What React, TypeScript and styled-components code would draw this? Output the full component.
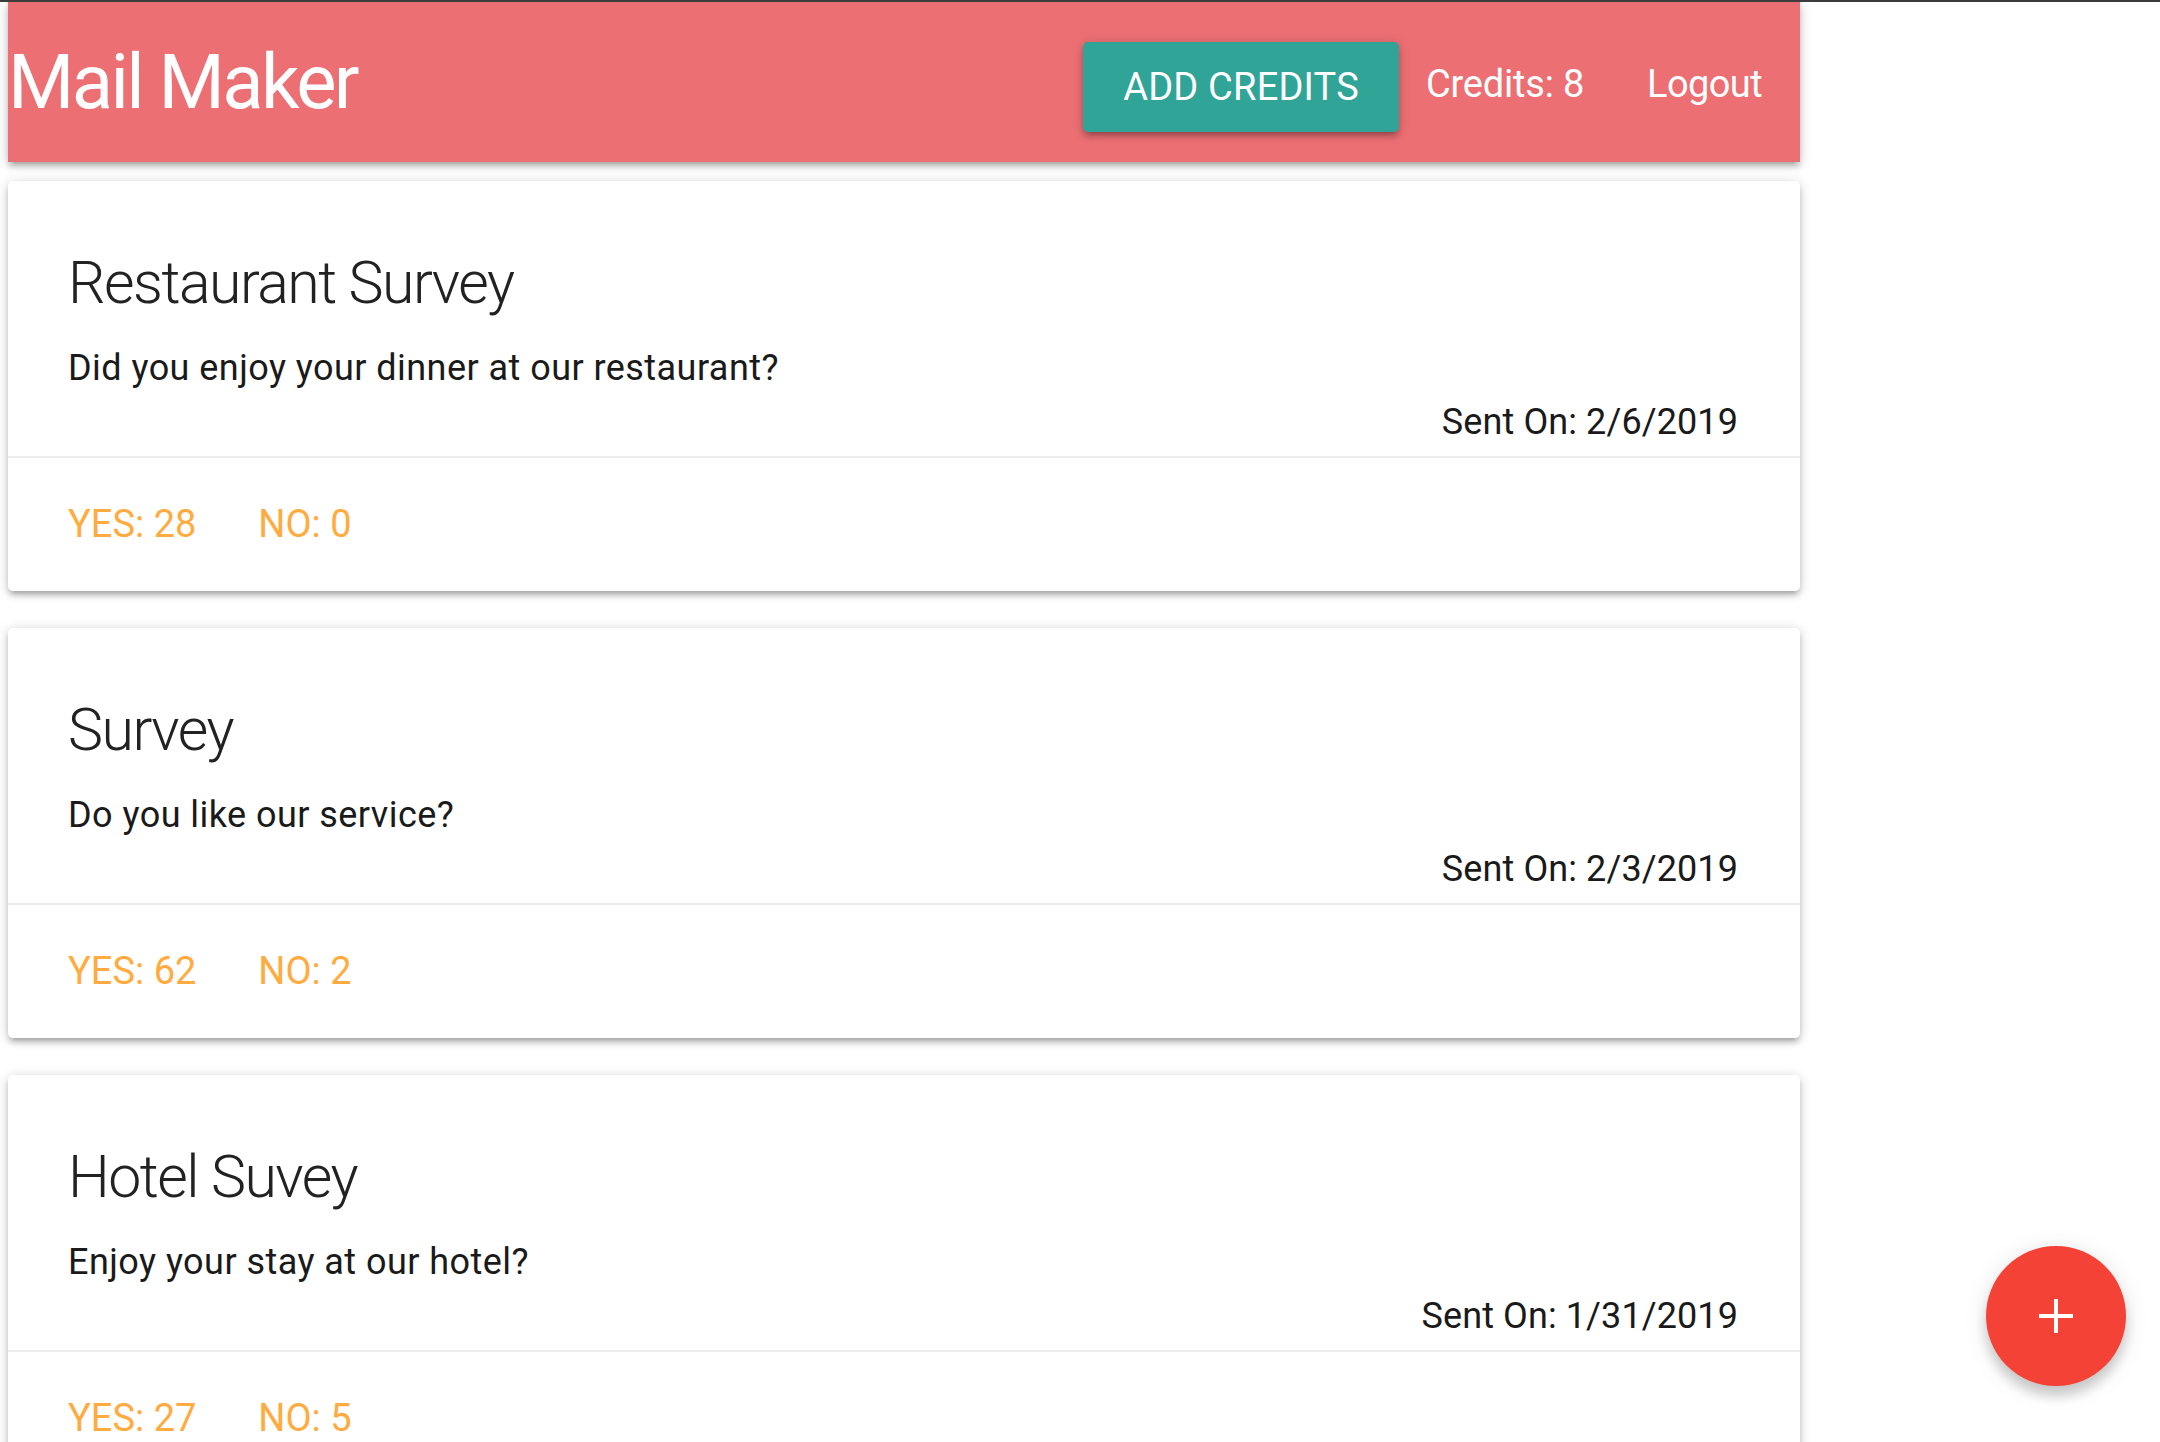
import React from "react";
import styled, { createGlobalStyle } from "styled-components";

type Survey = {
  id: number;
  title: string;
  body: string;
  yes: number;
  no: number;
  sentOn: string;
};

const surveys: Survey[] = [
  {
    id: 1,
    title: "Restaurant Survey",
    body: "Did you enjoy your dinner at our restaurant?",
    yes: 28,
    no: 0,
    sentOn: "2/6/2019",
  },
  {
    id: 2,
    title: "Survey",
    body: "Do you like our service?",
    yes: 62,
    no: 2,
    sentOn: "2/3/2019",
  },
  {
    id: 3,
    title: "Hotel Suvey",
    body: "Enjoy your stay at our hotel?",
    yes: 27,
    no: 5,
    sentOn: "1/31/2019",
  },
];

const App = () => {
  return (
    <>
      <GlobalStyle />
      <Page>
        <Header>
          <Brand href="#">Mail Maker</Brand>
          <NavRight>
            <AddCreditsButton>Add Credits</AddCreditsButton>
            <CreditsText>Credits: 8</CreditsText>
            <NavLink href="#">Logout</NavLink>
          </NavRight>
        </Header>
        <SurveyList>
          {surveys.map((survey) => (
            <Card key={survey.id}>
              <CardContent>
                <CardTitle>{survey.title}</CardTitle>
                <Question>{survey.body}</Question>
                <SentOn>Sent On: {survey.sentOn}</SentOn>
              </CardContent>
              <CardAction>
                <Count>YES: {survey.yes}</Count>
                <Count>NO: {survey.no}</Count>
              </CardAction>
            </Card>
          ))}
        </SurveyList>
      </Page>
      <Fab aria-label="New survey">
        <svg width="36" height="36" viewBox="0 0 36 36">
          <rect x="1" y="16" width="34" height="4" fill="#fff" />
          <rect x="16" y="1" width="4" height="34" fill="#fff" />
        </svg>
      </Fab>
    </>
  );
};

const GlobalStyle = createGlobalStyle`
  html, body {
    margin: 0;
    padding: 0;
    background: #fff;
  }
  body {
    font-family: Roboto, "Liberation Sans", sans-serif;
    color: rgba(0, 0, 0, 0.87);
    border-top: 2px solid #3c3c3c;
  }
  * {
    box-sizing: border-box;
  }
`;

const Page = styled.div`
  width: 1800px;
  padding-left: 8px;
`;

const Header = styled.nav`
  height: 160px;
  background-color: #ec6f74;
  display: flex;
  align-items: center;
  justify-content: space-between;
  box-shadow: 0 5px 5px 0 rgba(0, 0, 0, 0.14), 0 7px 3px -5px rgba(0, 0, 0, 0.12),
    0 2px 12px 0 rgba(0, 0, 0, 0.2);
`;

const Brand = styled.a`
  color: #fff;
  text-decoration: none;
  font-size: 76px;
  line-height: 160px;
  letter-spacing: -2.6px;
`;

const NavRight = styled.div`
  display: flex;
  align-items: center;
  margin-top: 12px;
`;

const AddCreditsButton = styled.button`
  height: 90px;
  padding: 0 40px;
  border: none;
  border-radius: 5px;
  background-color: #30a497;
  color: #fff;
  font-family: Roboto, "Liberation Sans", sans-serif;
  font-size: 38px;
  letter-spacing: 0.2px;
  text-transform: uppercase;
  margin-right: 27px;
  margin-top: -2px;
  box-shadow: 0 5px 5px 0 rgba(0, 0, 0, 0.14), 0 7px 3px -5px rgba(0, 0, 0, 0.12),
    0 2px 12px 0 rgba(0, 0, 0, 0.2);
`;

const CreditsText = styled.span`
  color: #fff;
  font-size: 38px;
  letter-spacing: -0.2px;
  margin-right: 63px;
  margin-top: -8px;
`;

const NavLink = styled.a`
  color: #fff;
  text-decoration: none;
  font-size: 38px;
  letter-spacing: -0.6px;
  margin-right: 38px;
  margin-top: -8px;
`;

const SurveyList = styled.div`
  display: flex;
  flex-direction: column;
  gap: 37px;
  padding: 19px 0 40px;
`;

const Card = styled.div`
  background: #fff;
  border-radius: 5px;
  box-shadow: 0 5px 5px 0 rgba(0, 0, 0, 0.14), 0 7px 3px -5px rgba(0, 0, 0, 0.12),
    0 2px 12px 0 rgba(0, 0, 0, 0.2);
`;

const CardContent = styled.div`
  padding: 62px 62px 7px 60px;
`;

const CardTitle = styled.div`
  font-size: 59px;
  font-weight: 300;
  line-height: 80px;
  letter-spacing: -1.5px;
  margin-bottom: 18px;
  color: #222;
`;

const Question = styled.p`
  margin: 0;
  font-size: 36px;
  line-height: 54px;
  letter-spacing: 0.45px;
  color: #1a1a1a;
`;

const SentOn = styled.p`
  margin: 0;
  font-size: 36px;
  line-height: 54px;
  letter-spacing: 0.1px;
  text-align: right;
  color: #1a1a1a;
`;

const CardAction = styled.div`
  border-top: 2px solid #ececec;
  padding: 38px 60px;
  display: flex;
  gap: 62px;
`;

const Count = styled.span`
  font-size: 38px;
  line-height: 57px;
  color: #ffab40;
`;

const Fab = styled.button`
  position: fixed;
  right: 34px;
  bottom: 56px;
  width: 140px;
  height: 140px;
  border-radius: 50%;
  border: none;
  background-color: #f44336;
  display: flex;
  align-items: center;
  justify-content: center;
  box-shadow: 0 10px 12px 0 rgba(0, 0, 0, 0.16), 0 4px 25px 0 rgba(0, 0, 0, 0.12);
`;

export default App;
